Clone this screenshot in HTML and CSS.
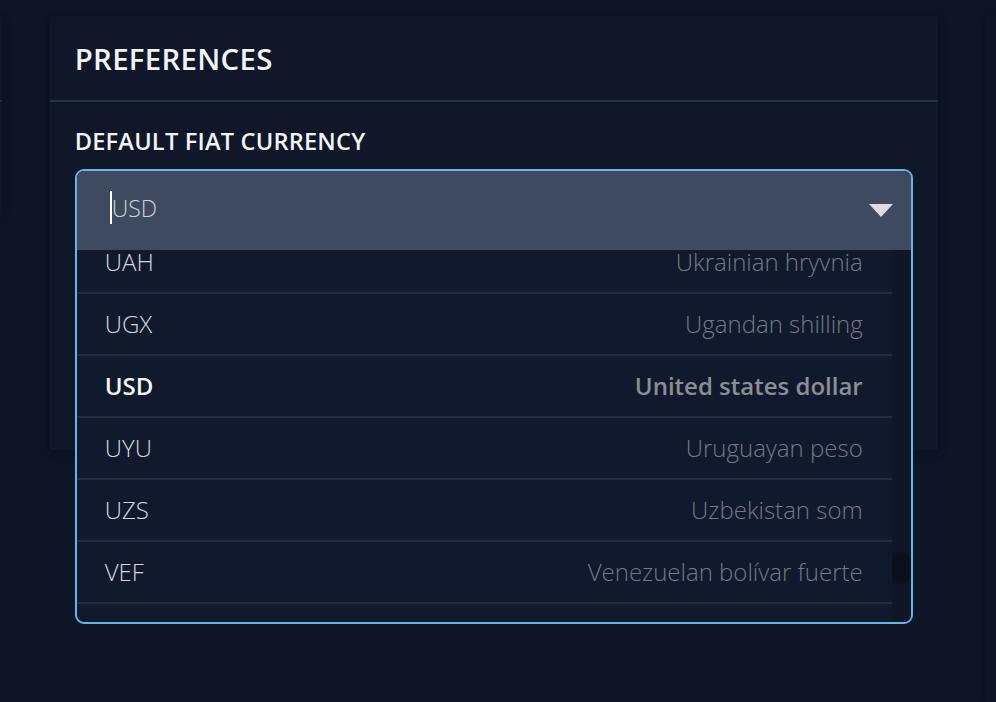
FILE: index.html
```html
<!DOCTYPE html>
<html lang="en">
<head>
    <meta charset="UTF-8">
    <meta name="viewport" content="width=device-width, initial-scale=1.0">
    <title>Preferences</title>
    <link rel="stylesheet" href="styles.css">
</head>
<body>

<div class="page">
    <div class="ghost-card ghost-left"></div>

    <div class="card">
        <div class="card-header">
            <h1>PREFERENCES</h1>
        </div>

        <div class="card-body">
            <label class="field-label" for="currency">DEFAULT FIAT CURRENCY</label>

            <div class="combo">
                <div class="combo-input">
                    <span class="caret"></span>
                    <span class="combo-value" id="currency">USD</span>
                    <span class="arrow"></span>
                </div>

                <div class="options">
                    <ul class="options-list">
                        <li class="option first">
                            <span class="code">UAH</span>
                            <span class="name">Ukrainian hryvnia</span>
                        </li>
                        <li class="option">
                            <span class="code">UGX</span>
                            <span class="name">Ugandan shilling</span>
                        </li>
                        <li class="option selected">
                            <span class="code">USD</span>
                            <span class="name">United states dollar</span>
                        </li>
                        <li class="option">
                            <span class="code">UYU</span>
                            <span class="name">Uruguayan peso</span>
                        </li>
                        <li class="option">
                            <span class="code">UZS</span>
                            <span class="name">Uzbekistan som</span>
                        </li>
                        <li class="option">
                            <span class="code">VEF</span>
                            <span class="name">Venezuelan bolívar fuerte</span>
                        </li>
                    </ul>
                    <div class="scroll-track">
                        <div class="scroll-thumb"></div>
                    </div>
                </div>
            </div>
        </div>
    </div>

    <div class="ghost-card ghost-right"></div>
</div>

</body>
</html>
```

FILE: styles.css
```css
body {
    margin: 0;
    background-color: #0d1527;
    font-family: "Open Sans", "Noto Sans", sans-serif;
    color: #f1f3f6;
}
.page {
    display: flex;
    align-items: flex-start;
    padding-top: 16px;
    height: 686px;
    overflow: hidden;
}
.ghost-card {
    background-color: #0f1729;
    box-shadow: 0 2px 8px rgba(0, 0, 0, 0.35);
    position: relative;
}
.ghost-left {
    width: 2px;
    height: 199px;
    margin-right: 48px;
}
.ghost-left::after {
    content: "";
    position: absolute;
    left: 0;
    right: 0;
    top: 84px;
    height: 2px;
    background-color: #273142;
}
.ghost-right {
    width: 12px;
    height: 686px;
    margin-left: 48px;
    background-color: #0e1628;
}
.card {
    width: 888px;
    height: 434px;
    flex-shrink: 0;
    background-color: #0f1729;
    box-shadow: 0 2px 8px rgba(0, 0, 0, 0.35);
}
.card-header {
    height: 84px;
    display: flex;
    align-items: center;
    padding: 0 25px;
    border-bottom: 2px solid #273142;
}
.card-header h1 {
    margin: 0 0 -2px;
    font-size: 29.4px;
    font-weight: 600;
    letter-spacing: 0.3px;
}
.card-body {
    padding: 23px 25px 0;
}
.field-label {
    display: block;
    font-size: 23.6px;
    font-weight: 600;
    line-height: 33px;
    margin-bottom: 11px;
    letter-spacing: 0.2px;
}
.combo {
    width: 838px;
    box-sizing: border-box;
    border: 2px solid #63b5ef;
    border-radius: 9px;
    overflow: hidden;
    background-color: #111a2c;
}
.combo-input {
    height: 79px;
    display: flex;
    align-items: center;
    padding: 0 18px 6px 33px;
    box-sizing: border-box;
    background-color: #3d4a5f;
}
.caret {
    width: 2px;
    height: 33px;
    background-color: #ffffff;
}
.combo-value {
    flex: 1;
    font-size: 23px;
    font-weight: 300;
    color: #cfd3da;
}
.arrow {
    width: 0;
    height: 0;
    margin-top: 6px;
    border-left: 12px solid transparent;
    border-right: 12px solid transparent;
    border-top: 13px solid #dcdcdf;
}
.options {
    display: flex;
    height: 372px;
}
.options-list {
    flex: 1;
    list-style: none;
    margin: 0;
    padding: 0;
    overflow: hidden;
}
.option {
    box-sizing: border-box;
    height: 62px;
    display: flex;
    align-items: center;
    justify-content: space-between;
    padding: 0 29px 2px 28px;
    border-bottom: 2px solid #232d3e;
    font-size: 24px;
    font-weight: 300;
}
.option.first {
    margin-top: -18px;
}
.code {
    color: #d3d7dd;
}
.name {
    color: #737983;
}
.option.selected .code {
    font-weight: 600;
    color: #f4f5f7;
}
.option.selected .name {
    font-weight: 600;
    color: #8b8e95;
}
.scroll-track {
    width: 19px;
    position: relative;
    background-color: #0f1727;
}
.scroll-thumb {
    position: absolute;
    left: 0;
    top: 302px;
    width: 19px;
    height: 32px;
    border-radius: 10px;
    background-color: #0a101c;
}
```
